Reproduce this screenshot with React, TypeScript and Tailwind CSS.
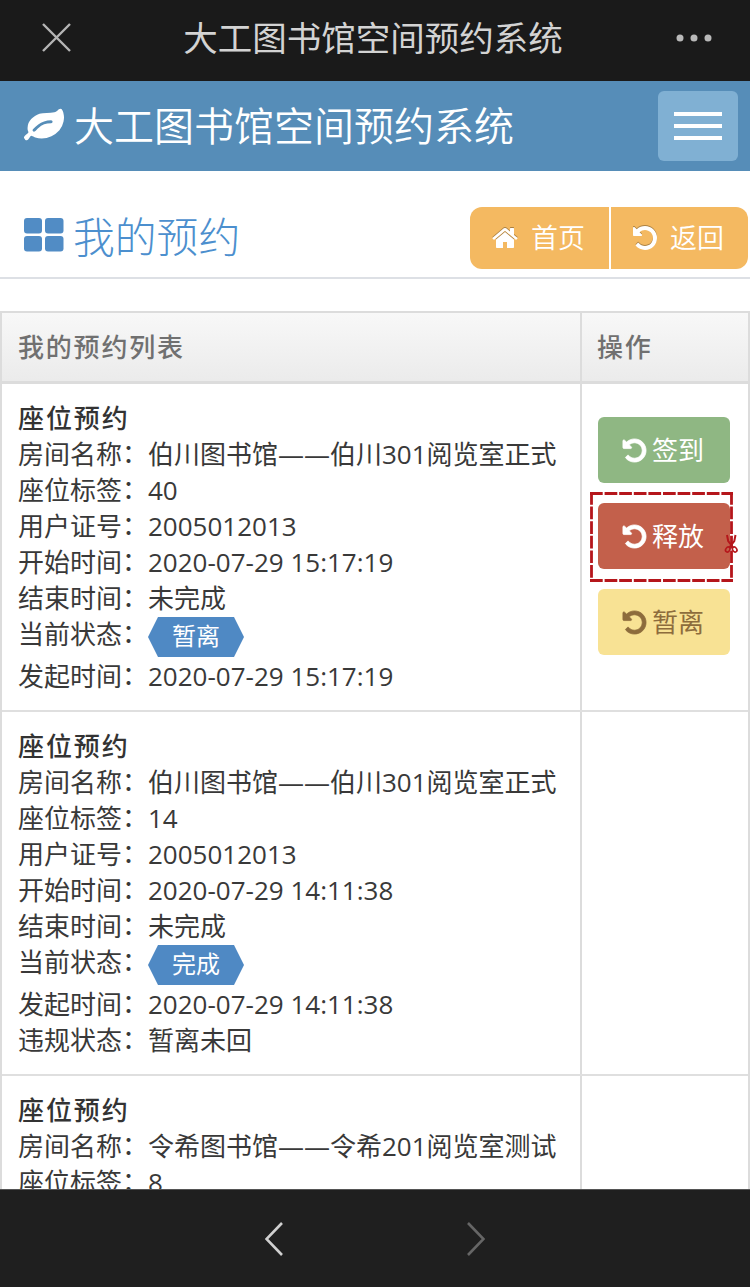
import type { ReactNode } from "react";

const UNDO =
  "M1664 896q0 156-61 298t-164 245-245 164-298 61q-172 0-327-72.5t-264-204.5q-7-10-6.5-22.5t8.5-20.5l137-138q10-9 25-9 16 2 23 12 73 95 179 147t225 52q104 0 198.5-40.5t163.5-109.5 109.5-163.5 40.5-198.5-40.5-198.5-109.5-163.5-163.5-109.5-198.5-40.5q-98 0-188 35.5t-160 101.5l137 138q31 30 14 69-17 40-59 40h-448q-26 0-45-19t-19-45v-448q0-42 40-59 39-17 69 14l130 129q107-101 244.5-156.5t284.5-55.5q156 0 298 61t245 164 164 245 61 298z";
const HOME =
  "M1472 992v480q0 26-19 45t-45 19h-384v-384h-256v384h-384q-26 0-45-19t-19-45v-480q0-1 .5-3t.5-3l575-474 575 474q1 2 1 6zm223-69l-62 74q-8 9-21 11h-3q-13 0-21-7l-692-577-692 577q-12 8-24 7-13-2-21-11l-62-74q-8-10-7-23.5t11-21.5l719-599q32-26 76-26t76 26l244 204v-195q0-14 9-23t23-9h192q14 0 23 9t9 23v408l219 182q10 8 11 21.5t-7 23.5z";
const LEAF =
  "M1280 704q0-26-19-45t-45-19q-172 0-318 49.5t-259.5 134-235.5 219.5q-19 21-19 45 0 26 19 45t45 19q24 0 45-19 27-24 74-71t67-66q137-124 268.5-176t313.5-52q26 0 45-19t19-45zm512-198q0 95-20 193-46 224-184.5 383t-357.5 268q-214 108-438 108-148 0-286-47-15-5-88-42t-96-37q-16 0-39.5 32t-45 70-52.5 70-60 32q-43 0-63.5-17.5t-45.5-59.5q-2-4-6-11t-5.5-10-3-9.5-1.5-13.5q0-35 31-73.5t68-65.5 68-56 31-48q0-4-14-38t-16-44q-9-51-9-104 0-115 43.5-220t119-184.5 170.5-139 204-95.5q55-18 145-25.5t179.5-9 178.5-6 163.5-24 113.5-56.5l29.5-29.5 29.5-28 27-20 36.5-16 43.5-4.5q39 0 70.5 46t47.5 112 24 124 8 96z";

function Icon({ d, className }: { d: string; className: string }) {
  return (
    <svg viewBox="0 0 1792 1792" fill="currentColor" className={className}>
      <path d={d} />
    </svg>
  );
}

function Badge({ children }: { children: ReactNode }) {
  return (
    <span className="mt-px flex h-10 w-24 justify-center bg-[#4f89c4] text-2xl leading-[38px] text-white [clip-path:polygon(10px_0,86px_0,100%_50%,86px_100%,10px_100%,0_50%)]">
      {children}
    </span>
  );
}

type Field = { label: string; value: string; badge?: boolean };

const records: Field[][] = [
  [
    { label: "房间名称", value: "伯川图书馆——伯川301阅览室正式" },
    { label: "座位标签", value: "40" },
    { label: "用户证号", value: "2005012013" },
    { label: "开始时间", value: "2020-07-29 15:17:19" },
    { label: "结束时间", value: "未完成" },
    { label: "当前状态", value: "暂离", badge: true },
    { label: "发起时间", value: "2020-07-29 15:17:19" },
  ],
  [
    { label: "房间名称", value: "伯川图书馆——伯川301阅览室正式" },
    { label: "座位标签", value: "14" },
    { label: "用户证号", value: "2005012013" },
    { label: "开始时间", value: "2020-07-29 14:11:38" },
    { label: "结束时间", value: "未完成" },
    { label: "当前状态", value: "完成", badge: true },
    { label: "发起时间", value: "2020-07-29 14:11:38" },
    { label: "违规状态", value: "暂离未回" },
  ],
  [
    { label: "房间名称", value: "令希图书馆——令希201阅览室测试" },
    { label: "座位标签", value: "8" },
  ],
];

function ActionButton({ label, className }: { label: string; className: string }) {
  return (
    <button className={`flex h-[66px] w-[132px] items-center justify-center gap-1 rounded-md pr-[3px] text-[26px] ${className}`}>
      <Icon d={UNDO} className="size-[27px] stroke-current stroke-[50px]" />
      {label}
    </button>
  );
}

function CutOutline() {
  return (
    <svg className="absolute -left-[9px] -top-[12px] overflow-visible" width="146" height="92" fill="none" stroke="#b5161b">
      <path d="M1 2.5H144M1 89.5H144" strokeWidth="2.8" strokeDasharray="12.700 1.900" />
      <path d="M2.5 1V90M142.5 1V90" strokeWidth="2.8" strokeDasharray="12.700 1.900" />
      <path d="M138 44l1.200 6 5 6.500M146.500 44l-1.200 6-5 6.500" strokeWidth="2" />
      <g strokeWidth="1.6">
        <ellipse cx="138.800" cy="58.500" rx="2" ry="2.700" transform="rotate(35 138.800 58.500)" />
        <ellipse cx="145.700" cy="58.500" rx="2" ry="2.700" transform="rotate(-35 145.700 58.500)" />
      </g>
    </svg>
  );
}

function Actions() {
  return (
    <div className="flex flex-col gap-5 pt-[17px]">
      <ActionButton label="签到" className="bg-[#8fb783] text-white" />
      <div className="relative">
        <ActionButton label="释放" className="bg-[#c3604b] text-white" />
        <CutOutline />
      </div>
      <ActionButton label="暂离" className="bg-[#f8e294] text-[#8d6c3c]" />
    </div>
  );
}

export default function App() {
  return (
    <div className="flex h-[1287px] w-[750px] flex-col overflow-hidden bg-white font-['Open_Sans','Noto_Sans_CJK_SC',sans-serif] text-[#393939]">
      <div className="flex h-[81px] shrink-0 items-center justify-between bg-[#1a1a1a] pb-1.5 pl-[42px] pr-[38px]">
        <svg width="29" height="29" stroke="#b5b5b5" strokeWidth="2.4">
          <path d="M1 1l27 27M28 1L1 28" />
        </svg>
        <h1 className="pr-px text-[34.500px] leading-[48px] text-[#d3d3d3]">大工图书馆空间预约系统</h1>
        <svg width="36" height="8" fill="#b9b9b9">
          <circle cx="4" cy="4" r="3.500" />
          <circle cx="18" cy="4" r="3.500" />
          <circle cx="32" cy="4" r="3.500" />
        </svg>
      </div>

      <header className="flex h-[90px] shrink-0 items-center justify-between bg-[#568db8] pl-6 pr-3">
        <div className="flex items-center gap-2.5 text-white">
          <Icon d={LEAF} className="size-10" />
          <span className="text-[40px] font-[350] leading-[60px]">大工图书馆空间预约系统</span>
        </div>
        <button className="flex h-[70px] w-20 flex-col items-center justify-center gap-2 rounded-md bg-[#80b0d3]">
          <span className="h-1 w-12 bg-white" />
          <span className="h-1 w-12 bg-white" />
          <span className="h-1 w-12 bg-white" />
        </button>
      </header>

      <div className="flex h-[108px] shrink-0 items-start justify-between border-b-2 border-[#dde0e5] pl-6 pr-0.5 pt-9">
        <div className="flex h-[60px] items-center gap-[9px] text-[#4c8fce]">
          <svg width="40" height="34" fill="#518cc5" className="-translate-y-0.5">
            <rect width="18" height="15.500" rx="3" />
            <rect x="21" width="18.500" height="15.500" rx="3" />
            <rect y="18" width="18" height="15.500" rx="3" />
            <rect x="21" y="18" width="18.500" height="15.500" rx="3" />
          </svg>
          <h2 className="text-[41.800px] font-light leading-[60px]">我的预约</h2>
        </div>
        <div className="flex h-[62px] gap-0.5 overflow-hidden rounded-xl text-[27px] font-[350] text-white">
          <button className="flex w-[139px] items-center gap-3 bg-[#f4b961] pl-[21px]">
            <Icon d={HOME} className="size-7 drop-shadow-[0_-1px_0_rgba(0,0,0,0.3)]" />
            首页
          </button>
          <button className="flex w-[137px] items-center gap-[11px] bg-[#f4b961] pl-5">
            <Icon d={UNDO} className="size-7 drop-shadow-[0_-1px_0_rgba(0,0,0,0.3)]" />
            返回
          </button>
        </div>
      </div>

      <main className="mt-8 min-h-0 flex-1 overflow-hidden border-x-2 border-t-2 border-[#dcdcdc]">
        <div className="grid h-[71px] grid-cols-[580px_1fr] border-b-[3px] border-[#dcdcdc] bg-linear-to-b from-[#f8f8f8] to-[#ebebeb] text-[26px] font-medium leading-[68px] tracking-[1.800px] text-[#707070]">
          <div className="border-r-2 border-[#dcdcdc] pl-4">我的预约列表</div>
          <div className="pl-[15px]">操作</div>
        </div>
        {records.map((fields, i) => (
          <div key={i} className="grid grid-cols-[580px_1fr] border-b-2 border-[#dfdfdf] text-[26px] leading-9">
            <div className="border-r-2 border-[#dcdcdc] py-4 pl-4">
              <h3 className="font-medium tracking-[1.900px] text-[#333]">座位预约</h3>
              {fields.map((f) => (
                <div key={f.label} className={f.badge ? "flex h-[42px] items-start" : "flex h-9"}>
                  <span className="flex w-[130px] shrink-0 whitespace-nowrap">
                    {f.label}
                    <span className="-translate-y-px">：</span>
                  </span>
                  {f.badge ? <Badge>{f.value}</Badge> : <span className="whitespace-nowrap">{f.value}</span>}
                </div>
              ))}
            </div>
            <div className="py-4 pl-4">{i === 0 && <Actions />}</div>
          </div>
        ))}
      </main>

      <nav className="flex h-[98px] shrink-0 items-center justify-center gap-[184px] border-t border-[#555] bg-[#1f1f1f]">
        <svg width="18" height="34" fill="none" stroke="#d0d0d0" strokeWidth="2.600">
          <path d="M17 1L1.500 17L17 33" />
        </svg>
        <svg width="18" height="34" fill="none" stroke="#666" strokeWidth="2.600">
          <path d="M1 1L16.500 17L1 33" />
        </svg>
      </nav>
    </div>
  );
}
